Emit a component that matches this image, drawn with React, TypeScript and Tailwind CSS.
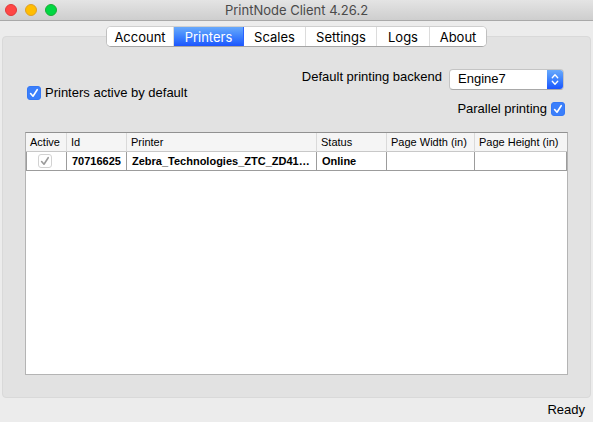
import { useState } from "react";

const tabs = [
  { name: "Account", width: "w-[67px]" },
  { name: "Printers", width: "w-[70px]" },
  { name: "Scales", width: "w-[62px]" },
  { name: "Settings", width: "w-[71px]" },
  { name: "Logs", width: "w-[53px]" },
  { name: "About", width: "w-[56px]" },
];

const columns = [
  { name: "Active", width: "w-[41px]" },
  { name: "Id", width: "w-[60px]" },
  { name: "Printer", width: "w-[190px]" },
  { name: "Status", width: "w-[70px]" },
  { name: "Page Width (in)", width: "w-[88px]" },
  { name: "Page Height (in)", width: "" },
];

const printers = [
  {
    id: "70716625",
    name: "Zebra_Technologies_ZTC_ZD410",
    label: "Zebra_Technologies_ZTC_ZD41…",
    status: "Online",
    width: "",
    height: "",
  },
];

function CheckBox({ id, label, muted = false }: { id: string; label?: string; muted?: boolean }) {
  return (
    <span className="grid size-3.5 shrink-0">
      <input
        id={id}
        type="checkbox"
        defaultChecked
        disabled={muted}
        aria-label={label}
        className={
          "peer col-start-1 row-start-1 size-3.5 appearance-none rounded-[3px] border " +
          (muted ? "border-[#d2d2d2] bg-white" : "border-[#a8a8a8] bg-white checked:border-[#3478f6] checked:bg-[#3b7ffb]")
        }
      />
      <svg
        viewBox="0 0 14 14"
        className={
          "pointer-events-none col-start-1 row-start-1 size-3.5 opacity-0 peer-checked:opacity-100 " +
          (muted ? "text-[#9b9b9b]" : "text-white")
        }
        fill="none"
        stroke="currentColor"
        strokeWidth="1.6"
        strokeLinecap="round"
        strokeLinejoin="round"
      >
        <path d="M3.6 7.5 6 10.2 10.2 3.7" />
      </svg>
    </span>
  );
}

export default function App() {
  const [active, setActive] = useState("Printers");

  return (
    <div className="flex min-h-screen flex-col bg-[#ececec] font-['Liberation_Sans',Arial,sans-serif] text-[13px] leading-4 text-black">
      <header className="grid h-[21px] grid-cols-[1fr_auto_1fr] items-center border-b border-[#a9a9a9] bg-linear-to-b from-[#e4e4e4] to-[#cecece] px-[5px]">
        <div className="flex gap-2">
          <button aria-label="Close" className="size-3 rounded-full border border-[#e0393a] bg-[#ff4645]" />
          <button aria-label="Minimize" className="size-3 rounded-full border border-[#dfa023] bg-[#ffbd00]" />
          <button aria-label="Zoom" className="size-3 rounded-full border border-[#1bac35] bg-[#00d742]" />
        </div>
        <h1 className="font-[Inter,sans-serif] text-[13px] text-[#4a4a4a]">PrintNode Client 4.26.2</h1>
      </header>

      <nav
        role="tablist"
        className="z-10 mt-[5px] flex h-[21px] self-center overflow-hidden rounded-[5px] border border-t-[#cfcfcf] border-r-[#c0c0c0] border-b-[#a5a5a5] border-l-[#c0c0c0] bg-white font-[Inter,sans-serif]"
      >
        {tabs.map((tab) => (
          <button
            key={tab.name}
            role="tab"
            aria-selected={active === tab.name}
            onClick={() => setActive(tab.name)}
            className={
              tab.width +
              " border-r text-center last:border-r-0 " +
              (active === tab.name
                ? "border-[#2a62ff] bg-linear-to-b from-[#68a9fb] to-[#1d53fd] text-white"
                : "border-[#dcdcdc] bg-white")
            }
          >
            {tab.name}
          </button>
        ))}
      </nav>

      <main className="mx-0.5 -mt-[11px] flex flex-1 flex-col rounded-[4px] border border-[#d9d9d9] bg-[#e2e2e2] px-[22px] pt-8 pb-[22px]">
        <div className="flex items-start justify-between pr-[3px] pl-0.5">
          <label htmlFor="active-default" className="flex items-center gap-1 pt-4">
            <CheckBox id="active-default" />
            Printers active by default
          </label>
          <div className="flex flex-col items-end">
            <div className="flex items-start gap-[7px] pr-px">
              <label htmlFor="backend">Default printing backend</label>
              <div className="grid h-[21px] w-[115px] overflow-hidden rounded-[4px] border border-[#c4c4c4] border-b-[#a8a8a8] bg-white">
                <select id="backend" className="col-start-1 row-start-1 appearance-none bg-transparent pb-0.5 pl-2">
                  <option>Engine7</option>
                </select>
                <svg
                  viewBox="0 0 17 21"
                  className="pointer-events-none col-start-1 row-start-1 h-full w-4 justify-self-end bg-linear-to-b from-[#68a9fb] to-[#1d53fd]"
                  fill="none"
                  stroke="white"
                  strokeWidth="1.5"
                  strokeLinecap="round"
                  strokeLinejoin="round"
                >
                  <path d="M5.5 8.5 8.5 5.3l3 3.2M5.5 12.5l3 3.2 3-3.2" />
                </svg>
              </div>
            </div>
            <label htmlFor="parallel" className="mt-[11px] flex items-center gap-1">
              Parallel printing
              <CheckBox id="parallel" />
            </label>
          </div>
        </div>

        <div className="mt-[15px] flex-1 border border-[#b4b4b4] border-t-[#919191] bg-white text-[11px]">
          <table className="w-full table-fixed border-separate border-spacing-0">
            <thead>
              <tr className="h-[19px] bg-[#f5f5f5]">
                {columns.map((column) => (
                  <th
                    key={column.name}
                    scope="col"
                    className={
                      column.width +
                      " border-r border-b border-r-[#dadada] border-b-[#c8c8c8] p-0 pl-1 text-left font-normal whitespace-nowrap last:border-r-0"
                    }
                  >
                    {column.name}
                  </th>
                ))}
              </tr>
            </thead>
            <tbody>
              {printers.map((printer) => (
                <tr
                  key={printer.id}
                  className="h-[19px] font-bold *:border-r *:border-b *:border-[#9c9c9c] *:p-0 *:pl-[5px] *:first:border-l"
                >
                  <td>
                    <div className="flex justify-center pr-2">
                      <CheckBox id={printer.id} label={printer.name + " active"} muted />
                    </div>
                  </td>
                  <td>{printer.id}</td>
                  <td className="whitespace-nowrap">{printer.label}</td>
                  <td>{printer.status}</td>
                  <td>{printer.width}</td>
                  <td>{printer.height}</td>
                </tr>
              ))}
            </tbody>
          </table>
        </div>
      </main>

      <footer className="flex h-6 items-center justify-end px-2">Ready</footer>
    </div>
  );
}
